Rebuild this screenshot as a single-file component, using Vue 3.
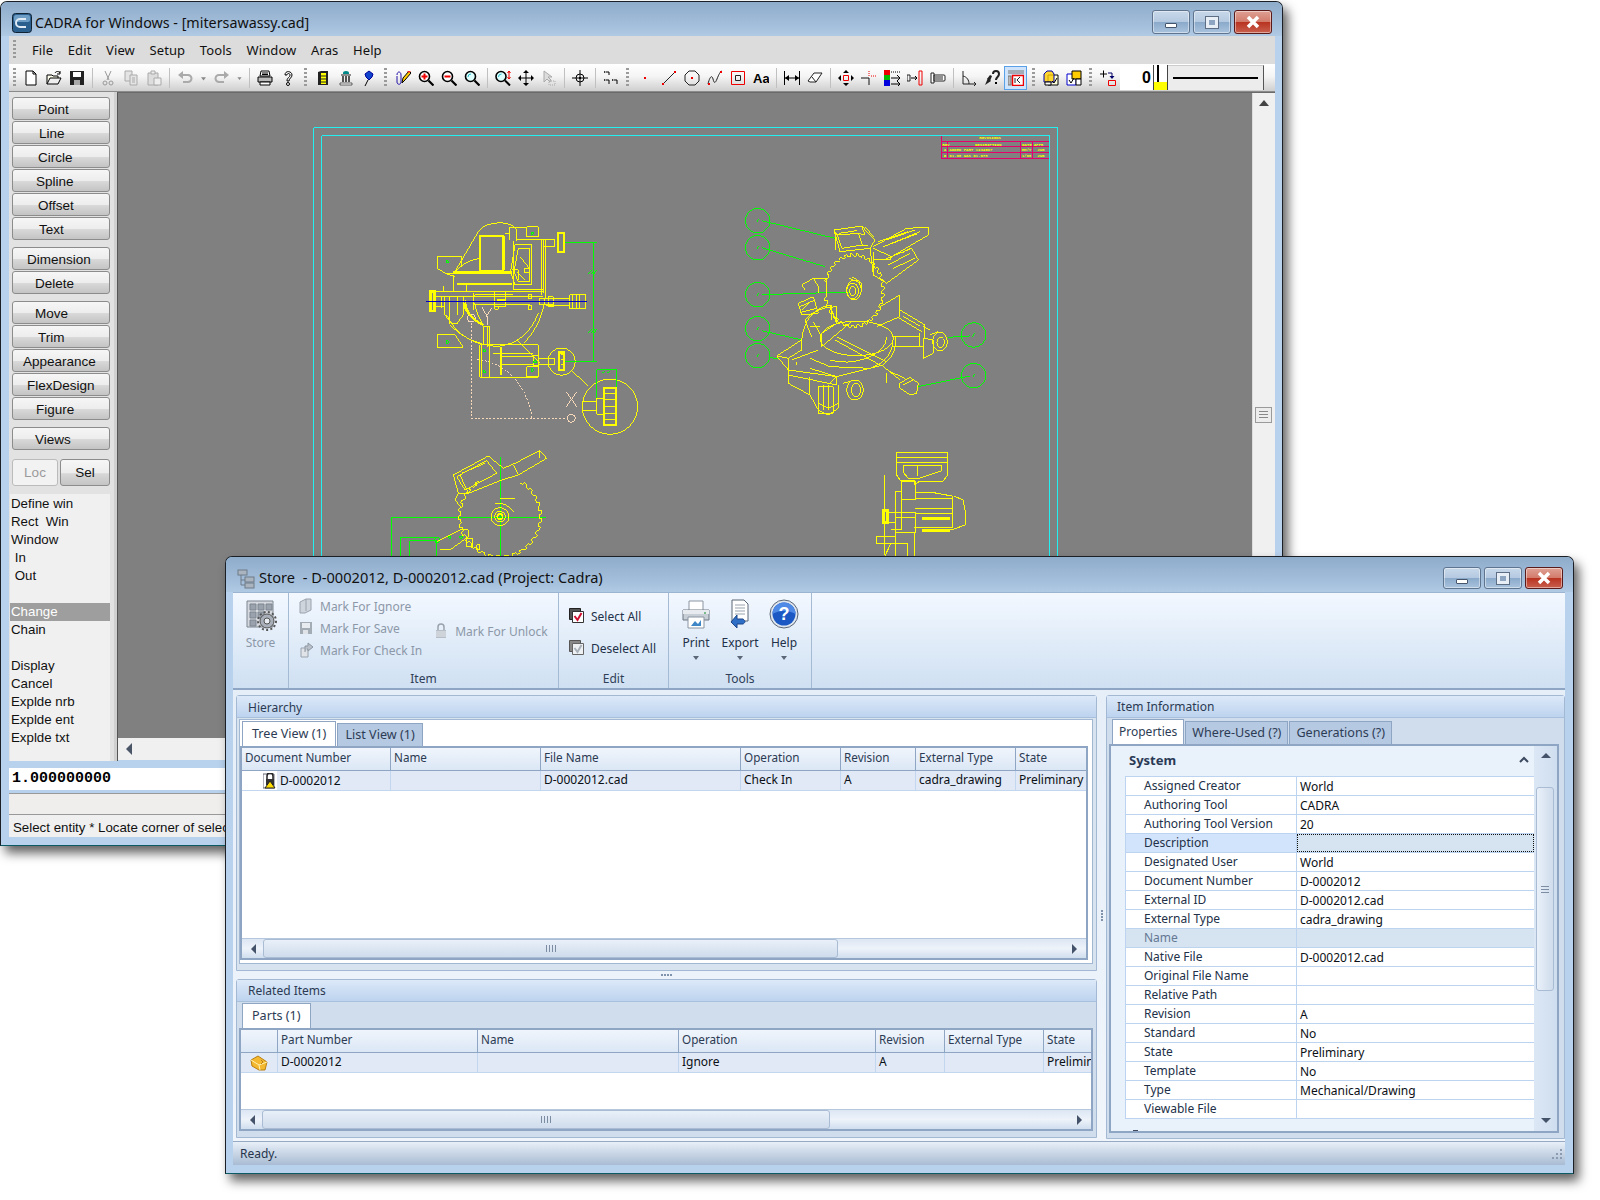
<script setup>
const icons = {
  new: '<path d="M3 1h7l3 3v11H3z" fill="#fff" stroke="#000"/><path d="M10 1v3h3" fill="none" stroke="#000"/>',
  open: '<path d="M1 14V5h5l1 1h5v2" fill="#ffe" stroke="#000"/><path d="M1 14l3-6h11l-3 6z" fill="#eee" stroke="#000"/><path d="M9 3c1-2 4-2 5 0M14 1v3h-3" fill="none" stroke="#000"/>',
  save: '<path d="M1 1h14v14H1z" fill="#222"/><path d="M4 2h8v5H4z" fill="#fff"/><path d="M5 10h6v5H5z" fill="#aaa"/>',
  cut: '<path d="M5 1l4 9M11 1L7 10" stroke="#999" fill="none"/><circle cx="5" cy="13" r="2" fill="none" stroke="#999"/><circle cx="11" cy="13" r="2" fill="none" stroke="#999"/>',
  copy: '<path d="M2 1h7v10H2z" fill="#e4e4e4" stroke="#aaa"/><path d="M7 5h7v10H7z" fill="#e4e4e4" stroke="#aaa"/><path d="M9 8h3M9 10h3M9 12h3" stroke="#aaa"/>',
  paste: '<path d="M2 3h10v12H2z" fill="#ddd" stroke="#aaa"/><path d="M5 1h4v3H5z" fill="#eee" stroke="#aaa"/><path d="M8 8h7v7H8z" fill="#eee" stroke="#aaa"/>',
  undo: '<path d="M3 5h8a3 3 0 0 1 0 7H6" fill="none" stroke="#aaa" stroke-width="2"/><path d="M6 1v8L1 5z" fill="#aaa"/>',
  redo: '<path d="M13 5H5a3 3 0 0 0 0 7h5" fill="none" stroke="#aaa" stroke-width="2"/><path d="M10 1v8l5-4z" fill="#aaa"/>',
  arrow: '<path d="M5 7h6l-3 4z" fill="#888"/>',
  print: '<path d="M4 1h8l1 5H3z" fill="#fff" stroke="#000"/><path d="M1 7h14v5H1z" fill="#bbb" stroke="#000"/><path d="M3 12h10v3H3z" fill="#fff" stroke="#000"/><path d="M5 3h6M5 4.500h6" stroke="#000"/>',
  help: '<path d="M5 5c0-5 7-4 7 0 0 3-3 3-3 6H7c0-4 3-3 3-6 0-2-3-2-3 0z" fill="#fff" stroke="#000"/><circle cx="8" cy="14" r="1.500" fill="#fff" stroke="#000"/>',
  book: '<path d="M3 2l3-1h7v14H3z" fill="#222"/><path d="M6 3h5v11H6z" fill="#ff0"/><path d="M6 6h5M6 9h5M6 12h5" stroke="#222"/>',
  temple: '<path d="M5 3a3 2 0 0 1 6 0v1H5z" fill="#088"/><path d="M3 5h10" stroke="#222"/><path d="M5 6v6M8 6v6M11 6v6" stroke="#222" stroke-width="1.500"/><path d="M2 13h12v2H2z" fill="#fff" stroke="#222" stroke-width=".7"/>',
  pin: '<path d="M5 7l-1-3 4-3 4 3-1 3-3 3z" fill="#14c" stroke="#009"/><path d="M7 10l-3 6" stroke="#000"/>',
  pencil: '<path d="M2 5c0-4 4-4 4 0v7c0 3-4 3-4 0V6" fill="none" stroke="#21a"/><path d="M7 13l1-5 6-7 2 2-6 7z" fill="#fc0" stroke="#000"/><path d="M12 1l2 2 2-2z" fill="#e22"/>',
  zp: '<circle cx="6.500" cy="6.500" r="5" fill="#fff" stroke="#000" stroke-width="1.600"/><path d="M3.500 6.500h6M6.500 3.500v6" stroke="#e00" stroke-width="2"/><path d="M10.500 10.500l5 5" stroke="#000" stroke-width="2.200"/>',
  zm: '<circle cx="6.500" cy="6.500" r="5" fill="#fff" stroke="#000" stroke-width="1.600"/><path d="M3.500 6.500h6" stroke="#e00" stroke-width="2"/><path d="M10.500 10.500l5 5" stroke="#000" stroke-width="2.200"/>',
  zo: '<circle cx="6.500" cy="6.500" r="5" fill="#dff" stroke="#000" stroke-width="1.600"/><path d="M4 7a3 3 0 0 1 3-3" stroke="#2bc" fill="none"/><path d="M10.500 10.500l5 5" stroke="#000" stroke-width="2.200"/>',
  zf: '<circle cx="6" cy="6.500" r="5" fill="#dff" stroke="#000" stroke-width="1.600"/><path d="M3.500 7a3 3 0 0 1 3-3" stroke="#2bc" fill="none"/><path d="M10 10.500l5 5" stroke="#000" stroke-width="2"/><path d="M14 1v8M12.500 3L14 1l1.500 2M12.500 7L14 9l1.500-2" stroke="#e00" fill="none"/>',
  mv: '<path d="M8 1v14M1 8h14" stroke="#000"/><path d="M8 0l3 3H5zM8 16l3-3H5zM0 8l3-3v6zM16 8l-3-3v6z"/>',
  cur: '<path d="M3 1v11l3-3 3 3 1-2-3-3h4z" fill="#ddd" stroke="#aaa"/><path d="M8 11h6v4H8z" fill="none" stroke="#aaa" stroke-dasharray="1 1"/>',
  cross: '<circle cx="8" cy="8" r="4" fill="none" stroke="#000"/><path d="M8 0v16M0 8h16" stroke="#000"/><path d="M7 7h2v2H7z" fill="#000"/>',
  pts: '<path d="M3 2h3v3M3 10h3v4M11 10h3v4" fill="none" stroke="#000"/><path d="M1 1l2 1-2 1zM1 9l2 1-2 1zM9 9l2 1-2 1z"/>',
  dot: '<path d="M7 7h2v2H7z" fill="#e00"/>',
  line: '<path d="M2 14L14 2" stroke="#222"/><path d="M1 13h2v2H1zM13 1h2v2h-2z" fill="#e00"/>',
  circ: '<path d="M5 1h6l4 4v6l-4 4H5l-4-4V5z" fill="none" stroke="#222"/><path d="M7 7h2v2H7z" fill="#e00"/>',
  spl: '<path d="M1 14c2-8 4-9 5-5s2 5 4 0 3-7 5-8" fill="none" stroke="#222"/><path d="M1 13h2v2H1zM13 1h2v2h-2z" fill="#e00"/>',
  sq: '<path d="M1.500 1.500h13v13h-13z" fill="none" stroke="#e00"/><path d="M5.500 5.500h5v5h-5z" fill="none" stroke="#222"/>',
  aa: '<text x="0" y="13" font-family="Liberation Sans" font-weight="700" font-size="13">Aa</text>',
  dim: '<path d="M.5 1v14M15.500 1v14M1 8h14" stroke="#000"/><path d="M1 8l4-3v6zM15 8l-4-3v6z"/>',
  eras: '<path d="M1 11l6-8h8l-6 9H3z" fill="#fff" stroke="#222"/><path d="M5 7l4 5" stroke="#222"/>',
  mvb: '<path d="M8 0l3 3H5zM8 16l3-3H5zM0 8l3-3v6zM16 8l-3-3v6z"/><path d="M5.500 5.500h5v5h-5z" fill="none" stroke="#e00"/>',
  trim: '<path d="M0 8h8v7" stroke="#111" fill="none"/><path d="M8 1v5M10 6h6" stroke="#e00" stroke-dasharray="1 1" fill="none"/>',
  col: '<path d="M0 0h6v5H0z" fill="#e00"/><path d="M0 5h6v5H0z" fill="#0b0"/><path d="M0 10h6v6H0z" fill="#00d"/><path d="M7 2h9" stroke="#000" stroke-dasharray="1 1"/><path d="M7 8h9M13 5l3 3-3 3M7 14h9M13 11l3 3-3 3" stroke="#000" fill="none"/>',
  str: '<path d="M0 5h3v6H0z" fill="none" stroke="#222"/><path d="M4 8h6M8 6l2 2-2 2" stroke="#000" fill="none"/><path d="M12 1h3v14h-3z" fill="none" stroke="#e00"/>',
  bolt: '<path d="M1 3h3v10H1zM4 5h10a1 1 0 0 1 1 1v4a1 1 0 0 1-1 1H4z" fill="#fff" stroke="#222"/><path d="M6 6v4M8 6v4M10 6v4M12 6v4" stroke="#222"/>',
  ang: '<path d="M2 1v13h13" fill="none" stroke="#222"/><path d="M2 6c4 1 6 4 6 8" fill="none" stroke="#222"/><path d="M13 12l2 2-2 2" fill="none" stroke="#222"/>',
  qry: '<path d="M1 15l3-7 3 3z" fill="#222"/><path d="M3 9l3 2 2-5-2-1z" fill="#222"/><path d="M9 4c0-4 6-4 6 0 0 3-3 3-3 6" fill="none" stroke="#222" stroke-width="2"/><path d="M11 12h2v2h-2z"/>',
  act: '<path d="M0 1h16M0 3h16" stroke="#777"/><path d="M0 6h3v9H0z" fill="#bbb" stroke="#777"/><path d="M4.500 5.500h11v10h-11z" fill="#fff" stroke="#e00" stroke-width="1.500"/><path d="M7 8v5M12 7l-3 3 3 3" fill="none" stroke="#223"/>',
  doc1: '<path d="M5 5h10v10H5z" fill="#ffd" stroke="#000"/><path d="M1 4l3-3h5l2 3v8H1z" fill="#fc0" stroke="#00a" fill-opacity=".8"/><path d="M2 12h6v3H2z" fill="#fff" stroke="#000"/><path d="M9 11l2 2 3-5" stroke="#000" fill="none"/>',
  doc2: '<path d="M1 4h9v11H1z" fill="#fff" stroke="#00c"/><path d="M6 1h9v8H6z" fill="#fc0" stroke="#000"/><path d="M10 9h5v6h-5z" fill="#fff" stroke="#000"/><path d="M3 10l2 3 3-5" stroke="#000" fill="none"/>',
  plus: '<path d="M0 4h7M3.500 .5v7" stroke="#000"/><path d="M8 3h4v4" stroke="#006" fill="none"/><path d="M9.500 6h5L12 9z" fill="#006"/><path d="M8.500 10.500h7v5h-7z" fill="none" stroke="#e00"/>'
}
const tools = [
  { t: 'grip' }, { i: 'new' }, { i: 'open' }, { i: 'save' }, { t: 'sep' },
  { i: 'cut' }, { i: 'copy' }, { i: 'paste' }, { t: 'sep' },
  { i: 'undo', w: 24 }, { i: 'arrow', w: 13 }, { i: 'redo', w: 24 }, { i: 'arrow', w: 11 }, { t: 'sep' },
  { i: 'print' }, { i: 'help' }, { t: 'grip', w: 12 },
  { i: 'book' }, { i: 'temple' }, { i: 'pin' }, { t: 'grip', w: 11 },
  { i: 'pencil' }, { i: 'zp' }, { i: 'zm' }, { i: 'zo' }, { t: 'sep' },
  { i: 'zf' }, { i: 'mv' }, { i: 'cur' }, { t: 'sep' },
  { i: 'cross' }, { t: 'sep' }, { i: 'pts' }, { t: 'grip', w: 11 },
  { i: 'dot', w: 24 }, { i: 'line' }, { i: 'circ' }, { i: 'spl' }, { i: 'sq' }, { i: 'aa' }, { t: 'sep' },
  { i: 'dim' }, { i: 'eras' }, { t: 'sep' },
  { i: 'mvb' }, { i: 'trim' }, { i: 'col' }, { i: 'str' }, { i: 'bolt' }, { t: 'sep' },
  { i: 'ang' }, { i: 'qry', w: 24 }, { i: 'act', on: true }, { t: 'grip', w: 12 },
  { i: 'doc1' }, { i: 'doc2' }, { t: 'grip', w: 11 }, { i: 'plus' }
]
const menus = ['File', 'Edit', 'View', 'Setup', 'Tools', 'Window', 'Aras', 'Help']
const cmdGroups = [
  [['Point', 25], ['Line', 26], ['Circle', 25], ['Spline', 23], ['Offset', 25], ['Text', 26]],
  [['Dimension', 14], ['Delete', 22]],
  [['Move', 22], ['Trim', 25], ['Appearance', 10], ['FlexDesign', 14], ['Figure', 23]],
  [['Views', 22]]
]
const picks = ['Define win', 'Rect  Win', 'Window', ' In', ' Out', '', 'Change', 'Chain', '', 'Display', 'Cancel', 'Explde nrb', 'Explde ent', 'Explde txt']

const hierCols = ['Document Number', 'Name', 'File Name', 'Operation', 'Revision', 'External Type', 'State']
const hierRow = ['', 'D-0002012.cad', 'Check In', 'A', 'cadra_drawing', 'Preliminary']
const relCols = ['', 'Part Number', 'Name', 'Operation', 'Revision', 'External Type', 'State']
const relRow = ['D-0002012', '', 'Ignore', 'A', '', 'Preliminary']
const props = [
  ['Assigned Creator', 'World'], ['Authoring Tool', 'CADRA'], ['Authoring Tool Version', '20'], ['Description', ''],
  ['Designated User', 'World'], ['Document Number', 'D-0002012'], ['External ID', 'D-0002012.cad'], ['External Type', 'cadra_drawing'],
  ['Name', ''], ['Native File', 'D-0002012.cad'], ['Original File Name', ''], ['Relative Path', ''],
  ['Revision', 'A'], ['Standard', 'No'], ['State', 'Preliminary'], ['Template', 'No'], ['Type', 'Mechanical/Drawing'], ['Viewable File', '']
]
const backTitle = 'CADRA for Windows - [mitersawassy.cad]'
const frontTitle = 'Store  - D-0002012, D-0002012.cad (Project: Cadra)'
function teeth(cx, cy, rx, ry, n, from, to) {
  let d = ''
  const step = (to - from) / n
  for (let k = 0; k < n; k++) {
    const a = from + k * step
    const pts = [[a, 0], [a + step * 0.45, 0], [a + step * 0.45, 7], [a + step * 0.8, 7], [a + step, 0]]
    for (const [an, extra] of pts) {
      const x = cx + (rx + extra) * Math.cos(an * Math.PI / 180)
      const y = cy + (ry + extra) * Math.sin(an * Math.PI / 180)
      d += (d ? 'L' : 'M') + x.toFixed(1) + ' ' + y.toFixed(1)
    }
  }
  return d
}
const sawA = teeth(300, 950, 118, 118, 26, -60, 240)
const sawB = teeth(372, 512, 84, 104, 30, -170, 170)
const balloons = [[83, 302], [83, 383], [83, 524], [83, 626], [83, 707], [731, 645], [731, 767]]
</script>

<template>
  <div class="desk">
    <section class="win back">
      <header class="title">
        <svg class="logo" viewBox="0 0 20 20"><rect x=".5" y=".5" width="19" height="19" rx="3" fill="#2b5f8e" stroke="#123"/><rect x="2" y="2" width="16" height="7" rx="2" fill="#6d9cc4"/><path d="M14 6H8a4 4 0 0 0 0 8h6" fill="none" stroke="#dfeaf4" stroke-width="2"/></svg>
        <span class="title-text t-back">{{ backTitle }}</span>
        <div class="controls tall">
          <button class="ctl"><i class="g-min"></i></button>
          <button class="ctl"><i class="g-max"></i></button>
          <button class="ctl close"><svg width="16" height="14" viewBox="0 0 16 14"><path d="M3 2l10 10M13 2L3 12" stroke="#fff" stroke-width="3.500"/></svg></button>
        </div>
      </header>
      <div class="client-back">
        <nav class="menubar">
          <i class="grip"></i>
          <span v-for="m in menus" :key="m" class="menu">{{ m }}</span>
        </nav>
        <div class="toolbar">
          <template v-for="(t, k) in tools" :key="k">
            <i v-if="t.t === 'grip'" class="tgrip" :style="{ width: (t.w || 10) + 'px' }"></i>
            <i v-else-if="t.t === 'sep'" class="tsep"></i>
            <span v-else class="tool" :class="{ on: t.on }" :style="{ width: (t.w || 23) + 'px' }">
              <svg width="16" height="16" viewBox="0 0 16 16" v-html="icons[t.i]"></svg>
            </span>
          </template>
          <span class="layer">0</span>
          <span class="swatch"></span>
          <span class="linebox"><i></i></span>
        </div>
        <div class="main">
          <aside class="side">
            <div class="cmds">
              <div v-for="(g, gi) in cmdGroups" :key="gi" class="cmd-group">
                <button v-for="b in g" :key="b[0]" class="cmd" :style="{ paddingLeft: b[1] + 'px' }">{{ b[0] }}</button>
              </div>
            </div>
            <div class="locsel">
              <button class="cmd loc">Loc</button>
              <button class="cmd sel">Sel</button>
            </div>
            <ul class="picks">
              <li v-for="(p, k) in picks" :key="k" :class="{ cur: p === 'Change' }">{{ p }}</li>
            </ul>
          </aside>
          <div class="view">
            <div class="view-top">
              <div class="canvas">
                <svg class="cad" width="1134" height="645" viewBox="118 93 1134 645" fill="none" shape-rendering="crispEdges">
                  <path d="M313.500 127.500H1057.500V700M313.500 127.500V700M321.500 135.500H1049.500V700M321.500 135.500V700" stroke="#22f0f0"/>
                  <g transform="translate(730 120) scale(.3333)">
                    <path d="M634 48V115H957M634 64H957M634 80H957M634 97H957M654 64V115M872 64V115M907 64V115" stroke="#e8006a" stroke-width="3"/>
                    <g fill="#ff0" font-family="Liberation Mono" font-weight="700" font-size="12">
                      <text x="748" y="58">REVISIONS</text><text x="637" y="77">REV</text><text x="735" y="77">DESCRIPTION</text><text x="876" y="77">DATE</text><text x="911" y="77">APPR</text>
                      <text x="641" y="94">A</text><text x="658" y="94">ADDED PART 1234567</text><text x="875" y="94">MM/Y</text><text x="922" y="94">JWB</text>
                      <text x="641" y="111">B</text><text x="658" y="111">01.08 WAS 01.078</text><text x="875" y="111">1/08</text><text x="922" y="111">JWB</text>
                    </g>
                  </g>
                  <!-- side view -->
                  <g transform="translate(400 200) scale(.3333)">
                    <g stroke="#f7d9b9" stroke-width="3">
                      <path d="M214 368V655H498M232 478C330 490 385 570 396 655" stroke-dasharray="6 5"/>
                      <circle cx="214" cy="354" r="12"/><circle cx="514" cy="655" r="12"/>
                      <path d="M498 575L531 621M531 575L498 621M245 320L262 350V375M275 325L258 350"/>
                    </g>
                    <g stroke="#ff0" stroke-width="3">
                      <path d="M165 215L235 95Q250 70 300 68Q340 70 350 90V122M165 215Q190 185 238 175M112 170H185V200M112 170V205L140 222H165M330 82V120M315 100H330"/>
                      <path d="M380 80H415V110H380ZM330 82H380M352 120H430V270M340 122V270H430M438 120V285M425 120V285M432 120V280M315 108V210"/>
                      <path d="M345 135H395V255H345L332 215ZM355 145H388V245H355L342 215ZM360 170L388 205M350 215L375 240M375 205H388V218H375ZM335 210H355V240"/>
                      <path d="M430 118H465V140H430M112 405H165L190 442H112ZM140 222L165 230M160 225V272"/>
                      <path d="M105 275H430M105 290H430M130 258V275M160 250V275M200 250V275M125 290V325M135 290V345L155 372H170L190 345V290M105 320H135M150 290V372M172 290V345M285 275V320H318V275M222 280V330M385 285H395V295H385ZM385 318H395V328H385ZM285 320H295V328H285Z"/>
                      <path d="M438 295H510V318H438M510 285H558V327H510ZM518 285V327M530 285V327M420 295H462V315H420ZM540 285V327M445 290H460V320H445Z"/>
                      <path d="M150 375Q200 430 290 440Q380 430 415 340M438 280Q430 370 372 430M195 300Q200 350 250 375M225 285H340M225 285Q215 300 225 315H390M350 420L420 490M140 345Q170 410 240 432M225 315Q235 355 250 375"/>
                      <path d="M240 435H415V532H240ZM270 440V532M250 380H270V440M250 380V435M280 460H400M305 470H400V495H305ZM400 468H415V498H400ZM415 475H465V495H415ZM380 500H415V530H380ZM245 435V530M262 380V440"/>
                      <circle cx="485" cy="485" r="41"/><circle cx="630" cy="620" r="83"/>
                      <path d="M515 512L565 558M590 595H610V643H590ZM548 605H590M548 632H590M610 580H650M610 598H650M610 620H650M610 640H650M610 660H650M482 465H495M482 480H495M482 495H495"/>
                    </g>
                    <g stroke="#ff0" stroke-width="7">
                      <path d="M240 108H310V215H240ZM160 218H335M170 252H335M290 300H315M475 100H492V156H475ZM92 275V333H104V275ZM303 440V525M612 565H648V675H612ZM478 458H492V510H478ZM192 310Q200 350 250 375"/>
                    </g>
                    <path d="M78 304H560" stroke="#0000c8" stroke-width="3"/>
                    <g stroke="#0f0" stroke-width="3">
                      <path d="M495 127H590M580 127V485M495 485H590M565 222L575 210M573 222L583 210M581 222L591 210M565 400L575 388M573 400L583 388M581 400L591 388M590 510H650M590 510V595M650 510V562M605 520L615 515M620 520L630 515"/>
                      <circle cx="397" cy="100" r="4"/><circle cx="142" cy="185" r="4"/><circle cx="142" cy="426" r="4"/><circle cx="253" cy="452" r="4"/><circle cx="253" cy="515" r="4"/><circle cx="397" cy="510" r="4"/><circle cx="405" cy="485" r="4"/>
                    </g>
                    <!-- saw, lower left -->
                    <g stroke="#0f0" stroke-width="3">
                      <path d="M301 772V1070M-27 952H437M0 1012H110M30 1022H110V1070M-27 952V1070M0 1012V1070M30 1022V1070"/>
                      <circle cx="112" cy="1020" r="8"/><circle cx="149" cy="1012" r="4"/><circle cx="183" cy="1012" r="4"/>
                    </g>
                    <g stroke="#ff0" stroke-width="3">
                      <path :d="sawA"/>
                      <circle cx="300" cy="950" r="27"/><circle cx="300" cy="950" r="16"/><circle cx="300" cy="950" r="8" stroke-width="5"/>
                      <path d="M160 825L265 768L310 805L345 790L420 752L440 775L355 825L305 840L205 880L175 880ZM170 830L260 782L290 820L195 870ZM185 820L255 790M340 795L355 825M420 752V775M300 895H345M285 912Q320 905 340 935M110 1025L180 990H205V1010L150 1050H120M175 880L165 900L185 925M180 825L205 880"/>
                      <path d="M200 1015H218V1040H200ZM230 1035H240V1050H230Z"/>
                    </g>
                  </g>
                  <!-- isometric view -->
                  <g transform="translate(730 120) scale(.3333)">
                    <g stroke="#0f0" stroke-width="3">
                      <circle v-for="b in balloons" :key="b[0] + '-' + b[1]" :cx="b[0]" :cy="b[1]" r="37"/>
                      <path v-for="b in balloons" :key="'t' + b[0] + '-' + b[1]" :d="`M${b[0] - 3} ${b[1] + 5}L${b[0] + 3} ${b[1] - 5}`"/>
                      <path d="M95 302L315 355M95 383L285 440M95 524L360 516M95 632L215 660M120 712L145 717M655 652L720 648M565 800L720 768"/>
                    </g>
                    <g stroke="#ff0" stroke-width="3">
                      <path :d="sawB"/>
                      <ellipse cx="368" cy="513" rx="18" ry="24"/><ellipse cx="368" cy="513" rx="9" ry="13"/><ellipse cx="372" cy="510" rx="22" ry="30"/><path d="M358 475L395 490V515M365 470L390 485"/>
                      <path d="M312 330L395 318L435 360L420 385L330 395ZM322 345L385 340L397 375L335 385ZM312 330L322 345M395 318L405 345L385 340M318 335V390M328 340L380 332M405 320L432 352M390 378H415M420 385L430 465"/>
                      <path d="M430 380L530 325L595 322V345L485 410M445 365L535 335M460 380L560 342M430 385L485 410L480 420H430M460 420L545 385L565 420L470 490L430 465V395M475 435L540 400M490 445L555 415M470 360L555 330M480 372L570 335M515 400L540 385"/>
                      <path d="M215 495L250 475H290V510M225 510L215 495M250 475L265 500V520M205 550L250 530L265 580L215 585ZM215 570L240 545M210 560L255 540M210 578L260 565M290 480V530"/>
                      <path d="M140 708L215 660V690L175 715ZM140 708L175 750V790L240 825L265 870L295 885L325 865V795M175 750L320 770L460 735M175 715V750M185 720L265 690M240 745L320 770V795L175 765M240 770V825M200 725V735M320 770L300 790"/>
                      <path d="M215 660Q225 570 300 555M245 650L225 600Q260 560 320 560V610L275 640V680M240 620H270M300 555L320 610M305 555V600M250 605L275 650"/>
                      <ellipse cx="380" cy="655" rx="110" ry="52"/><path d="M490 655Q490 720 420 745L300 740L240 715M320 650L470 725M315 660L450 735M495 650Q505 700 460 735M470 650Q470 690 410 715Q350 735 300 720M275 680L365 605"/>
                      <path d="M510 525V590L440 620M510 525L450 560M510 570L585 615L580 680H490M490 650H570M500 590L575 635M520 590L570 618M570 640V680M580 620L600 630"/>
                      <ellipse cx="630" cy="665" rx="22" ry="28"/><ellipse cx="632" cy="667" rx="11" ry="16"/><path d="M580 715L610 700V660L580 655ZM600 645L625 635"/>
                      <path d="M510 790L540 772L565 790L560 820L540 825L510 805ZM460 740L510 780M470 760V790M480 755L525 775M518 795L550 780"/>
                      <ellipse cx="375" cy="810" rx="25" ry="30"/><ellipse cx="378" cy="810" rx="14" ry="20"/><path d="M340 790L375 780"/>
                      <path d="M265 800H310V880H265ZM280 795V870M295 795V870M265 850L295 865L325 850"/>
                    </g>
                  </g>
                  <!-- upright view -->
                  <g transform="translate(860 440)">
                    <g stroke="#ff0">
                      <path d="M36 12H87V36L83 41H60L54 45V40H40L36 34ZM36 17H87M36 22H87M43 25H81V31L60 38H48L43 32ZM57 25V36"/>
                      <path d="M41 41H55V59H41ZM35 51H41V89H35ZM55 52H70L92 56V87H54M55 58H92M55 68H92M55 73H92M94 56L103 60L105 70V85L94 89H88"/>
                      <path d="M35 72H55V92H35M35 77H55M35 92H54V116M28 72H35V82H28ZM16 96H35V103H16ZM31 89H35V116M25 116L31 103M35 103H47V116"/>
                    </g>
                    <path d="M24.500 35V72M24.500 82V115" stroke="#ff0"/>
                    <path d="M23 70h4v12h-4zM62 78H90M62 90H90" stroke="#ff0" stroke-width="3"/>
                  </g>
                </svg>
              </div>
              <div class="vscroll">
                <i class="up"></i>
                <i class="vthumb"></i>
              </div>
            </div>
            <div class="hscroll-back"><i class="left"></i></div>
          </div>
        </div>
        <div class="field">1.000000000</div>
        <div class="blank"></div>
        <div class="status-back">Select entity * Locate corner of selection window</div>
      </div>
    </section>

    <section class="win front">
      <header class="title">
        <svg class="logo small" viewBox="0 0 20 20"><g fill="#aab4c0" stroke="#6f7b88"><rect x="1" y="1" width="9" height="5"/><rect x="8" y="8" width="9" height="5"/><rect x="8" y="14" width="9" height="5"/></g><path d="M4 6v5h4M4 11v5h4" stroke="#6f7b88" fill="none"/></svg>
        <span class="title-text t-front">{{ frontTitle }}</span>
        <div class="controls">
          <button class="ctl"><i class="g-min"></i></button>
          <button class="ctl"><i class="g-max"></i></button>
          <button class="ctl close"><svg width="16" height="14" viewBox="0 0 16 14"><path d="M3 2l10 10M13 2L3 12" stroke="#fff" stroke-width="3.500"/></svg></button>
        </div>
      </header>
      <div class="client-front">
        <div class="ribbon">
          <div class="rgroup g-store">
            <div class="rbody big-col dis">
              <svg width="32" height="32" viewBox="0 0 32 32"><g fill="#9aa2ad" stroke="#7c858f"><path d="M2 2h26v26H2z" fill="#d5d9df"/><path d="M5 5h6v6H5zM13 5h6v6h-6zM21 5h6v6h-6zM5 13h6v6H5zM13 13h6v6h-6zM5 21h6v6H5z"/></g><circle cx="22" cy="22" r="7" fill="#a8afb8" stroke="#555"/><circle cx="22" cy="22" r="9" fill="none" stroke="#555" stroke-width="2" stroke-dasharray="2 2.300"/><circle cx="22" cy="22" r="3" fill="#e8edf3" stroke="#555"/></svg>
              <span class="big-label">Store</span>
            </div>
          </div>
          <div class="rgroup g-item">
            <div class="rbody item-body dis">
              <div class="col">
                <span class="ritem"><svg width="16" height="16" viewBox="0 0 16 16"><path d="M2 4l6-3h5v11l-6 3H2z" fill="#cfd5dc" stroke="#9aa2ad"/><path d="M8 1v12" stroke="#9aa2ad"/></svg>Mark For Ignore</span>
                <span class="ritem"><svg width="16" height="16" viewBox="0 0 16 16"><path d="M2 2h12v12H2z" fill="#a3abb5"/><path d="M4 3h8v5H4z" fill="#e8ecf0"/><path d="M5 10h5v4H5z" fill="#dfe3e8"/></svg>Mark For Save</span>
                <span class="ritem"><svg width="16" height="16" viewBox="0 0 16 16"><path d="M3 6h7v9H3z" fill="#e0e4e9" stroke="#9aa2ad"/><path d="M7 10V4h3V1l5 4-5 4V7H9" fill="#b9c0c9" stroke="#8d96a1"/></svg>Mark For Check In</span>
              </div>
              <span class="ritem unlock"><svg width="16" height="16" viewBox="0 0 16 16"><path d="M5 7V4a3 3 0 0 1 6 0v3" fill="none" stroke="#9aa2ad" stroke-width="1.500"/><path d="M3 7h10v8H3z" fill="#b6bdc6"/><path d="M3 9h10M3 11h10M3 13h10" stroke="#e6eaee"/></svg>Mark For Unlock</span>
            </div>
            <div class="rlabel">Item</div>
          </div>
          <div class="rgroup g-edit">
            <div class="rbody edit-body">
              <span class="ritem"><svg width="16" height="16" viewBox="0 0 16 16"><path d="M.5.5h11v3h-8v8h-3z" fill="#555" stroke="#222"/><path d="M3.500 3.500h11v11h-11z" fill="#fff" stroke="#333"/><path d="M5.500 8l3 4 4-7" fill="none" stroke="#d01030" stroke-width="2"/></svg>Select All</span>
              <span class="ritem"><svg width="16" height="16" viewBox="0 0 16 16"><path d="M.5.500h11v3h-8v8h-3z" fill="#888" stroke="#555"/><path d="M3.500 3.500h11v11h-11z" fill="#eef1f4" stroke="#666"/><path d="M5.500 8l3 4 4-7" fill="none" stroke="#a9b1ba" stroke-width="2"/></svg>Deselect All</span>
            </div>
            <div class="rlabel">Edit</div>
          </div>
          <div class="rgroup g-tools">
            <div class="rbody tools-body">
              <div class="big">
                <svg width="30" height="30" viewBox="0 0 30 30"><path d="M8 2h14v10H8z" fill="#fff" stroke="#8a95a2"/><path d="M2 11h26v10H2z" fill="#c8ced6" stroke="#6c7682"/><path d="M2 11h26v4H2z" fill="#e7ebef"/><circle cx="24" cy="14" r="1" fill="#5a6"/><path d="M7 18h16v11H7z" fill="#fff" stroke="#8a95a2"/><path d="M10 27l4-5 3 3 3-4v6z" fill="#3f86c7"/></svg>
                <span>Print</span><i class="drop"></i>
              </div>
              <div class="big">
                <svg width="30" height="30" viewBox="0 0 30 30"><path d="M7 1h12l4 4v17H7z" fill="#fff" stroke="#5a6675"/><path d="M10 6h10M10 9h10M10 12h10M10 15h10" stroke="#99a3af"/><path d="M8 20h6v-4l6 7-6 6v-4H8c-2-1-3-3 0-5z" fill="#2f6fc6" stroke="#1c478a" transform="matrix(-1 0 0 1 26 0)"/></svg>
                <span>Export</span><i class="drop"></i>
              </div>
              <div class="big">
                <svg width="30" height="30" viewBox="0 0 30 30"><circle cx="15" cy="15" r="14" fill="#dfe6ee" stroke="#5b6777"/><circle cx="15" cy="15" r="11.500" fill="#1b58c4"/><path d="M3.500 15a11.500 11.500 0 0 1 23 0c-6-4-17-4-23 0z" fill="#4f8ae6"/><text x="15" y="21" text-anchor="middle" font-family="Liberation Sans" font-size="18" font-weight="700" fill="#fff">?</text></svg>
                <span>Help</span><i class="drop"></i>
              </div>
            </div>
            <div class="rlabel">Tools</div>
          </div>
        </div>
        <div class="work">
          <div class="left-col">
            <section class="panel hier">
              <h3 class="phead">Hierarchy</h3>
              <div class="whitewrap">
                <div class="tabs white">
                  <span class="tab active first">Tree View (1)</span>
                  <span class="tab">List View (1)</span>
                </div>
                <div class="gridbox">
                  <div class="thead hcols">
                    <span v-for="c in hierCols" :key="c" class="th">{{ c }}</span>
                  </div>
                  <div class="hcols">
                    <span class="td firstcell"><svg width="14" height="16" viewBox="0 0 14 16"><path d="M0 1h11v14H0z" fill="#fff" stroke="#667"/><path d="M4 6V3a3 3 0 0 1 6 0v3" fill="none" stroke="#222" stroke-width="1.500"/><path d="M3 6h8v6H3z" fill="#333"/><path d="M7 8l5 7H2z" fill="#fd0" stroke="#222"/></svg><b>D-0002012</b></span>
                    <span v-for="(c, k) in hierRow" :key="k" class="td">{{ c }}</span>
                  </div>
                  <div class="grow"></div>
                  <div class="hbar">
                    <i class="left"></i>
                    <div class="htrack"><i class="hthumb t575"></i></div>
                    <i class="right"></i>
                  </div>
                </div>
              </div>
            </section>
            <div class="hsplit"><i></i><i></i><i></i><i></i></div>
            <section class="panel rel">
              <h3 class="phead">Related Items</h3>
              <div class="tabs blue">
                <span class="tab active first">Parts (1)</span>
              </div>
              <div class="gridbox">
                <div class="thead rcols">
                  <span v-for="(c, k) in relCols" :key="k" class="th">{{ c }}</span>
                </div>
                <div class="rcols">
                  <span class="td iconcell"><svg width="18" height="16" viewBox="0 0 18 16"><path d="M1 5l7-4 9 6-2 8H9L2 11z" fill="#f4b92f" stroke="#b97f10"/><path d="M1 5l8 5 8-3M9 10l1 5" stroke="#fff1b0" fill="none"/><path d="M11 5l2 2-2 2" stroke="#b97f10" fill="none"/></svg></span>
                  <span v-for="(c, k) in relRow" :key="k" class="td">{{ c }}</span>
                </div>
                <div class="grow"></div>
                <div class="hbar">
                  <i class="left"></i>
                  <div class="htrack"><i class="hthumb t568"></i></div>
                  <i class="right"></i>
                </div>
              </div>
            </section>
          </div>
          <div class="vsplit"><i></i><i></i><i></i><i></i></div>
          <section class="panel info">
            <h3 class="phead ind">Item Information</h3>
            <div class="tabs blue">
              <span class="tab active first">Properties</span>
              <span class="tab">Where-Used (?)</span>
              <span class="tab">Generations (?)</span>
            </div>
            <div class="propbox">
              <div class="propmain">
                <div class="sys"><strong>System</strong><svg width="10" height="8" viewBox="0 0 10 8"><path d="M1 6l4-4 4 4" fill="none" stroke="#3c4a60" stroke-width="2"/></svg></div>
                <div class="props">
                  <div v-for="p in props" :key="p[0]" class="prow" :class="{ desc: p[0] === 'Description', nm: p[0] === 'Name' }">
                    <span class="pk">{{ p[0] }}</span>
                    <span class="pv">{{ p[1] }}</span>
                  </div>
                </div>
                <i class="clipmark"></i>
              </div>
              <div class="pscroll">
                <i class="up2"></i>
                <i class="pthumb"><u></u></i>
                <i class="down2"></i>
              </div>
            </div>
          </section>
        </div>
        <footer class="status-front">
          <span>Ready.</span>
          <svg width="12" height="12" viewBox="0 0 12 12" fill="#8a9bb2"><path d="M9 1h2v2H9zM5 5h2v2H5zM9 5h2v2H9zM1 9h2v2H1zM5 9h2v2H5zM9 9h2v2H9z"/></svg>
        </footer>
      </div>
    </section>
  </div>
</template>

<style scoped>
.desk { position: relative; width: 1600px; height: 1200px; background: #fff; overflow: hidden; font-family: "Liberation Sans", Arial, sans-serif; }
.win { position: absolute; box-sizing: border-box; border: 1px solid #1b2026; border-bottom-color: #0c5a63; border-radius: 7px 7px 0 0; background: #b8d1ec; box-shadow: 5px 7px 11px rgba(0, 0, 0, .62); display: flex; flex-direction: column; }
.back { left: 0; top: 1px; width: 1283px; height: 845px; }
.front { left: 225px; top: 556px; width: 1349px; height: 618px; }

.title { flex: none; display: flex; align-items: flex-start; padding-left: 11px; box-sizing: border-box; background: linear-gradient(#8eaccb, #a4bfdb 70%, #b0cae4); border-radius: 6px 6px 0 0; }
.back .title { height: 34px; padding-top: 11px; }
.front .title { height: 35px; padding-top: 10px; }
.front .title { padding-left: 12px; }
.logo { width: 20px; height: 20px; margin-right: 3px; }
.logo.small { margin-right: 2px; margin-left: -1px; margin-top: 2px; }
.title-text { font-family: "Noto Sans", sans-serif; color: #111; white-space: pre; line-height: 20px; }
.t-back { font-size: 14.3px; }
.t-front { font-size: 14.6px; line-height: 20px; }
.controls { margin-left: auto; margin-right: 10px; display: flex; gap: 3px; margin-top: 0; }
.back .controls { margin-top: -3px; }
.front .controls { margin-top: 0; }
.ctl { width: 38px; height: 22px; padding: 0; border: 1px solid #5f748e; border-radius: 3px; display: flex; align-items: center; justify-content: center; background: linear-gradient(#c8d8ea, #b4c9e0 49%, #8aa9ca 50%, #a9c3de); box-shadow: inset 0 0 0 1px rgba(255, 255, 255, .45); }
.tall .ctl { height: 24px; }
.ctl.close { border-color: #5a1a1a; background: linear-gradient(#dfa194, #d27b6b 49%, #b8321f 50%, #c9604e); }
.g-min { display: block; width: 12px; height: 5px; margin-top: 6px; background: #fff; border: 1px solid #44556c; border-radius: 1px; box-sizing: border-box; }
.g-max { display: block; width: 12px; height: 11px; box-sizing: border-box; border: 3px solid #e8eef6; outline: 1px solid #5c6d84; background: #8ea6c2; }

.client-back { margin-left: 8px; width: 1266px; display: flex; flex-direction: column; }
.menubar { height: 28px; background: #dcdcdc; display: flex; align-items: center; font: 13px "Noto Sans", sans-serif; color: #111; }
.grip { width: 3px; height: 20px; margin-left: 4px; margin-right: 16px; background: repeating-linear-gradient(#999 0 2px, transparent 2px 4px); }
.menu { margin-right: 14.6px; letter-spacing: .1px; }
.toolbar { height: 28px; display: flex; align-items: center; background: linear-gradient(#fff, #f5f5f5 45%, #cfcfcf); border-bottom: 1px solid #8a8a8a; box-sizing: border-box; padding-right: 8px; }
.tgrip { height: 20px; flex: none; background: repeating-linear-gradient(#9a9a9a 0 2px, transparent 2px 4px) 50% 0 / 3px 100% no-repeat; }
.tsep { width: 8px; height: 20px; flex: none; background: linear-gradient(#c0c0c0, #c0c0c0) 50% 0 / 1px 100% no-repeat; }
.tool { height: 24px; flex: none; display: flex; align-items: center; justify-content: center; box-sizing: border-box; }
.tool.on { background: #cfe3fa; border: 1px solid #5aa0e8; }
.layer { width: 33px; height: 24px; flex: none; background: #fff; font: 700 16px "Liberation Sans", sans-serif; color: #000; text-align: right; line-height: 24px; box-sizing: border-box; margin-left: 1px; padding-right: 2px; }
.swatch { width: 15px; height: 25px; flex: none; box-sizing: border-box; border-left: 1px solid #444; border-right: 1px solid #444; background: linear-gradient(90deg, transparent 3px, #000 3px 5px, transparent 5px) 0 0 / 100% 17px no-repeat, linear-gradient(#fff 0 17px, #ff0 17px); }
.linebox { width: 96px; height: 25px; flex: none; display: flex; align-items: center; padding: 0 5px; box-sizing: border-box; background: #ececec; border-right: 1px solid #555; border-top: 1px solid #ccc; }
.linebox i { display: block; height: 2px; width: 100%; background: #000; }

.main { height: 669px; display: flex; }
.side { width: 105px; flex: none; background: #e2e2e2; border-right: 3px solid #d0d0d0; box-sizing: content-box; display: flex; flex-direction: column; padding-top: 5px; }
.cmds { display: flex; flex-direction: column; gap: 7px; }
.cmd-group { display: flex; flex-direction: column; gap: 1px; }
.cmd { display: block; width: 98px; height: 23px; margin-left: 3px; padding: 1px 0 0; box-sizing: border-box; text-align: left; border: 1px solid #8c8c8c; border-radius: 3px; background: linear-gradient(#f6f6f6, #ededed 50%, #d8d8d8 55%, #c4c4c4); font: 13.5px "Liberation Sans", sans-serif; color: #111; }
.locsel { display: flex; gap: 2px; padding: 8px 0 8px 3px; margin-top: 1px; }
.cmd.loc, .cmd.sel { margin: 0; height: 27px; padding: 0 0 1px; text-align: center; }
.cmd.loc { width: 46px; background: #f2f2f2; color: #9a9a9a; border-color: #bbb; }
.cmd.sel { width: 50px; }
.picks { list-style: none; margin: 0 0 0 1px; padding: 1px 0 0; width: 100px; flex: 1; background: #f0f0f0; font: 13.3px/18px "Liberation Sans", sans-serif; color: #111; }
.picks li { height: 18px; padding-left: 1px; white-space: pre; }
.picks li.cur { background: #9e9e9e; color: #fff; }
.view { flex: 1; display: flex; flex-direction: column; border-left: 1px solid #555; border-top: 1px solid #6a6a6a; min-width: 0; }
.view-top { height: 645px; display: flex; }
.canvas { width: 1134px; height: 645px; background: #808080; overflow: hidden; flex: none; }
.cad { display: block; }
.vscroll { flex: 1; background: #f0f0f0; position: relative; border-left: 1px solid #ddd; box-sizing: border-box; }
.up { position: absolute; left: 6px; top: 7px; border: 5px solid transparent; border-top: 0; border-bottom: 6px solid #444; }
.vthumb { position: absolute; left: 2px; top: 314px; width: 17px; height: 16px; box-sizing: border-box; border: 1px solid #9a9a9a; background: repeating-linear-gradient(#888 0 1px, #eee 1px 3px) 50% 50% / 9px 9px no-repeat, #ececec; }
.hscroll-back { height: 22px; background: #f0f0f0; position: relative; }
.left { display: block; width: 0; height: 0; border: 5px solid transparent; border-left: 0; border-right: 5px solid #4a5568; }
.hscroll-back .left { position: absolute; left: 8px; top: 5px; border-top-width: 6px; border-bottom-width: 6px; border-right-width: 6px; }
.field { margin-top: 7px; height: 22px; background: #fff; font: 700 15px/21px "Liberation Mono", monospace; color: #000; padding-left: 3px; }
.blank { height: 22px; margin-top: 3px; background: #f0eeec; border-top: 1px solid #999; border-bottom: 1px solid #999; box-sizing: border-box; }
.status-back { height: 22px; background: #f0f0f0; font: 13.3px/25px "Liberation Sans", sans-serif; color: #111; padding-left: 4px; white-space: nowrap; overflow: hidden; }

.client-front { margin: 0 8px 8px 7px; flex: 1; display: flex; flex-direction: column; font: 12px "Noto Sans", sans-serif; color: #223048; min-height: 0; }
.ribbon { height: 98px; flex: none; display: flex; background: linear-gradient(#f3f8ff, #cfe0f2); border-bottom: 2px solid #8ea6c4; box-sizing: border-box; border-top: 1px solid #9ab4d2; }
.rgroup { position: relative; border-right: 1px solid #a5bad3; box-sizing: border-box; flex: none; display: flex; flex-direction: column; }
.g-store { width: 56px; }
.g-item { width: 270px; }
.g-edit { width: 110px; }
.g-tools { width: 143px; }
.rbody { flex: 1; }
.rlabel { height: 18px; line-height: 18px; text-align: center; color: #2f3f58; }
.dis { color: #8c98a8; }
.big-col { display: flex; flex-direction: column; align-items: center; padding-top: 6px; }
.big-label { margin-top: 3px; }
.item-body { display: flex; padding: 3px 0 0 9px; }
.col { display: flex; flex-direction: column; gap: 2px; }
.ritem { display: flex; align-items: center; gap: 6px; height: 20px; white-space: nowrap; }
.unlock { margin-left: 11px; margin-top: 25px; }
.edit-body { display: flex; flex-direction: column; gap: 12px; padding: 13px 0 0 10px; color: #223048; }
.tools-body { display: flex; padding-top: 6px; color: #223048; }
.big { display: flex; flex-direction: column; align-items: center; width: 44px; }
.big:first-child { margin-left: 5px; }
.big span { margin-top: 6px; line-height: 16px; }
.drop { width: 0; height: 0; margin-top: 5px; border: 3px solid transparent; border-top: 4px solid #5b6777; border-bottom: 0; }

.work { flex: 1; min-height: 0; display: grid; grid-template-columns: 861px 9px 459px; padding: 5px 0 2px 3px; background: linear-gradient(#e6eef8, #f0f5fb); box-sizing: border-box; }
.left-col { display: flex; flex-direction: column; min-height: 0; }
.panel { border: 1px solid #a3b8d3; border-radius: 3px 3px 0 0; background: #d0ddec; box-sizing: border-box; display: flex; flex-direction: column; min-height: 0; }
.hier { height: 276px; background: #d8e3f0; }
.rel { height: 159px; }
.phead { margin: 0; height: 22px; flex: none; font: 12px/23px "Noto Sans", sans-serif; color: #2b3a52; padding-left: 11px; background: linear-gradient(#dce9f9, #bdd3ee); border-bottom: 1px solid #a9c0dc; box-sizing: border-box; }
.phead.ind { padding-left: 10px; line-height: 22px; }
.rel .phead { line-height: 22px; }
.whitewrap { flex: 1; min-height: 0; margin: 1px 3px 6px 2px; border: 1px solid #a3b8d3; background: #fff; display: flex; flex-direction: column; padding-bottom: 3px; box-sizing: border-box; }
.tabs { height: 26px; flex: none; display: flex; align-items: flex-end; padding-left: 4px; gap: 1px; box-sizing: border-box; }
.tabs.white { background: #fff; padding-left: 2px; height: 26px; }
.rel .tabs, .info .tabs { padding-left: 5px; }
.tab { height: 23px; line-height: 22px; padding: 0 7px; font-size: 12.6px; background: #b5c9e2; border: 1px solid #8ea6c4; border-bottom: 0; color: #2d3c55; box-sizing: border-box; white-space: nowrap; }
.tab.active { background: #fff; height: 25px; line-height: 23px; padding: 0 9px; }
.rel .tab.active { line-height: 24px; }
.info .tab { padding: 0 6px; }
.info .tab.active { padding: 0 6px; font-size: 12px; }
.gridbox { flex: 1; min-height: 0; margin: 0 3px 6px 2px; border: 2px solid #8ea6c4; background: #fff; display: flex; flex-direction: column; overflow: hidden; }
.whitewrap .gridbox { margin: 0 4px 0 0; }
.thead { background: linear-gradient(#f0f5fc, #dbe7f5); height: 23px; border-bottom: 1px solid #8ea6c4; box-sizing: border-box; line-height: 19px; color: #2b3a52; font-size: 11.7px; }
.hcols, .rcols { display: grid; flex: none; }
.hcols { grid-template-columns: 149px 150px 200px 100px 75px 100px 70px; }
.rcols { grid-template-columns: 37px 200px 201px 197px 69px 99px 48px; }
.hcols:not(.thead), .rcols:not(.thead) { height: 20px; line-height: 18px; color: #0b0f16; }
.th { padding-left: 3px; border-right: 1px solid #8ea6c4; overflow: hidden; white-space: nowrap; }
.th:last-child { border-right: 0; }
.td { padding-left: 3px; background: #e0e9f5; border-right: 1px solid #c2d6f0; border-bottom: 1px solid #c2d6f0; overflow: hidden; white-space: nowrap; box-sizing: border-box; }
.td:last-child { border-right: 0; }
.firstcell { background: linear-gradient(90deg, #fff 35px, #e0e9f5 35px); padding-left: 21px; display: flex; align-items: center; gap: 0; }
.firstcell b { font-weight: 400; margin-left: 3px; }
.iconcell { display: flex; align-items: center; justify-content: center; padding: 0; }
.grow { flex: 1; }
.hbar { height: 20px; flex: none; display: flex; align-items: center; background: linear-gradient(#dce6f3, #eef3fa 50%, #d0deee); border-top: 1px solid #b5c7dd; box-sizing: border-box; position: relative; }
.hbar .left { margin-left: 9px; border-right-color: #44536a; border-top-width: 5px; border-bottom-width: 5px; }
.right { display: block; width: 0; height: 0; margin-right: 9px; border: 5px solid transparent; border-right: 0; border-left: 5px solid #44536a; }
.htrack { flex: 1; height: 100%; padding-left: 7px; }
.hthumb { display: block; height: 19px; box-sizing: border-box; border: 1px solid #a9bcd4; border-radius: 3px; background: repeating-linear-gradient(90deg, #7c8da3 0 1px, transparent 1px 3px) 50% 50% / 10px 7px no-repeat, linear-gradient(#e9f0f9, #cfdcec); }
.t575 { width: 575px; }
.t568 { width: 568px; }
.hsplit { height: 8px; display: flex; justify-content: center; align-items: center; gap: 1px; flex: none; }
.hsplit i, .vsplit i { display: block; width: 2px; height: 2px; background: #7f93ad; }
.vsplit { display: flex; flex-direction: column; justify-content: center; align-items: center; gap: 1px; padding-bottom: 4px; }
.info { height: 444px; }
.info .tabs { height: 26px; }
.propbox { flex: 1; min-height: 0; margin: 0 5px 5px 2px; border: 2px solid #8ea6c4; display: flex; background: #e9f1fb; }
.propmain { width: 423px; flex: none; position: relative; overflow: hidden; }
.sys { height: 30px; display: flex; align-items: center; justify-content: space-between; padding: 0 5px 2px 18px; box-sizing: border-box; }
.sys strong { font-size: 13px; font-weight: 700; color: #2a3a55; }
.props { margin-left: 14px; border-top: 1px solid #bcd4f0; border-left: 1px solid #bcd4f0; }
.prow { display: grid; grid-template-columns: 171px 1fr; height: 19px; line-height: 18px; background: #fff; border-bottom: 1px solid #bcd4f0; box-sizing: border-box; color: #0b0f16; }
.pk { padding-left: 18px; border-right: 1px solid #bcd4f0; color: #223048; }
.pv { padding-left: 3px; line-height: 20px; }
.desc .pk { background: #d2e4fb; }
.desc .pv { background: #d6e4f2; outline: 1px dotted #111; outline-offset: -1px; }
.nm { background: #d6e4f2; }
.nm .pk { color: #647892; }
.clipmark { position: absolute; left: 22px; bottom: 0; width: 5px; height: 1px; background: #3c4a60; }
.pscroll { flex: 1; position: relative; background: linear-gradient(90deg, #dce7f5, #cfdeef); }
.up2, .down2 { position: absolute; left: 7px; width: 0; height: 0; border: 5px solid transparent; }
.up2 { top: 7px; border-top: 0; border-bottom: 5px solid #44536a; }
.down2 { bottom: 8px; border-bottom: 0; border-top: 5px solid #44536a; }
.pthumb { position: absolute; left: 2px; top: 41px; width: 18px; height: 204px; box-sizing: border-box; border: 1px solid #a9bcd4; border-radius: 3px; background: linear-gradient(90deg, #e9f0f9, #cfdcec); display: flex; align-items: center; justify-content: center; }
.pthumb u { display: block; width: 8px; height: 7px; background: repeating-linear-gradient(#7c8da3 0 1px, transparent 1px 3px); }
.status-front { height: 24px; flex: none; display: flex; align-items: center; justify-content: space-between; padding: 0 2px 0 7px; background: linear-gradient(#e8eff8, #a9bcd3); border-top: 1px solid #97aac4; box-sizing: border-box; color: #26344b; }
</style>
